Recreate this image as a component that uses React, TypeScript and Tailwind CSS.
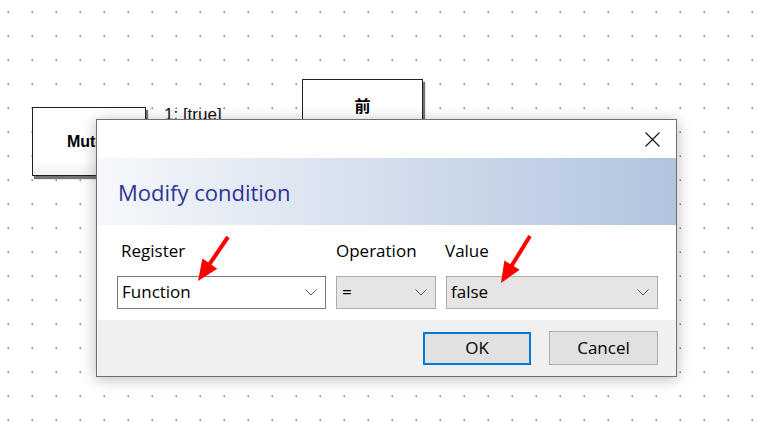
import React from "react";

function Arrow({ x1, y1, x2, y2 }: { x1: number; y1: number; x2: number; y2: number }) {
  const dx = x2 - x1;
  const dy = y2 - y1;
  const len = Math.hypot(dx, dy);
  const ux = dx / len;
  const uy = dy / len;
  const px = -uy;
  const py = ux;
  const hl = 21;
  const hw = 9;
  const bx = x2 - ux * hl;
  const by = y2 - uy * hl;
  return (
    <g>
      <line x1={x1} y1={y1} x2={bx + ux * 3} y2={by + uy * 3} stroke="#ff0000" strokeWidth={4} />
      <polygon
        points={`${x2},${y2} ${bx + px * hw},${by + py * hw} ${bx - px * hw},${by - py * hw}`}
        fill="#ff0000"
      />
    </g>
  );
}

function Chevron() {
  return (
    <svg width="12" height="7" viewBox="0 0 12 7" className="shrink-0">
      <path d="M0.5 0.5 L6 6 L11.5 0.5" fill="none" stroke="#5a5a5a" strokeWidth="1" />
    </svg>
  );
}

const uiFont = { fontFamily: '"Open Sans", "Noto Sans", sans-serif' };

export default function App() {
  return (
    <div className="relative w-[768px] h-[431px] overflow-hidden bg-white">
      {/* dotted canvas */}
      <svg className="absolute inset-0" width="768" height="431">
        <defs>
          <pattern id="dots" x="0" y="0" width="24" height="24" patternUnits="userSpaceOnUse">
            <rect x="7.5" y="11.5" width="1.5" height="1.5" fill="#777" />
          </pattern>
        </defs>
        <rect width="768" height="431" fill="url(#dots)" />
      </svg>

      {/* diagram nodes */}
      <div
        className="absolute left-[32px] top-[107px] w-[114px] h-[69px] border border-[#222] bg-gradient-to-b from-white from-[80%] to-[#f0f0f0] shadow-[2px_3px_1px_rgba(0,0,0,0.55)] flex items-center justify-center pl-[2px] text-[16px] font-bold text-black"
        style={{ fontFamily: '"Liberation Sans", Arial, sans-serif' }}
      >
        Mutex
      </div>
      <div
        className="absolute left-[164px] top-[105px] text-[17px] leading-[20px] text-[#111]"
        style={{ fontFamily: '"Liberation Sans", Arial, sans-serif' }}
      >
        1: [true]
      </div>
      <div
        className="absolute left-[302px] top-[79px] w-[121px] h-[68px] border border-[#222] bg-white shadow-[2px_3px_1px_rgba(0,0,0,0.55)] flex justify-center pt-[14px] text-[16px] leading-[22px] font-bold text-black"
        style={{ fontFamily: '"Noto Sans CJK SC", sans-serif' }}
      >
        前
      </div>

      {/* dialog */}
      <div
        className="absolute left-[96px] top-[119px] w-[581px] h-[258px] border border-[#707070] bg-white shadow-[0_2px_14px_rgba(0,0,0,0.28)] flex flex-col"
        style={uiFont}
      >
        <div className="h-[38px] shrink-0 flex items-center justify-end pr-[16px]">
          <svg width="15" height="15" viewBox="0 0 15 15">
            <path d="M0.5 0.5 L14.5 14.5 M14.5 0.5 L0.5 14.5" stroke="#111" strokeWidth="1.1" />
          </svg>
        </div>
        <div className="h-[67px] shrink-0 bg-gradient-to-r from-[#f6f8fb] to-[#b1c4de] flex items-center pl-[21px]">
          <span className="text-[22px] text-[#2f3594] leading-none">Modify condition</span>
        </div>
        <div className="flex-1 pl-[20px] pr-[18px] pt-[14px] flex gap-[10px] text-[17px] text-black">
          <div className="w-[209px] shrink-0 flex flex-col">
            <div className="h-[24px] leading-[24px] pl-[4px]">Register</div>
            <div className="mt-[13px] h-[33px] border border-[#7a7a7a] bg-white flex items-center justify-between pl-[4px] pr-[8px]">
              <span className="leading-[24px] -mt-[2px]">Function</span>
              <Chevron />
            </div>
          </div>
          <div className="w-[100px] shrink-0 flex flex-col">
            <div className="h-[24px] leading-[24px]">Operation</div>
            <div className="mt-[13px] h-[33px] border border-[#adadad] bg-[#e5e5e5] flex items-center justify-between pl-[5px] pr-[8px]">
              <span className="leading-[24px] -mt-[2px]">=</span>
              <Chevron />
            </div>
          </div>
          <div className="w-[212px] shrink-0 flex flex-col">
            <div className="h-[24px] leading-[24px] -ml-[1px]">Value</div>
            <div className="mt-[13px] h-[33px] border border-[#adadad] bg-[#e5e5e5] flex items-center justify-between pl-[4px] pr-[8px]">
              <span className="leading-[24px] -mt-[2px]">false</span>
              <Chevron />
            </div>
          </div>
        </div>
        <div className="h-[56px] shrink-0 bg-[#f0f0f0] flex items-center justify-end gap-[18px] pr-[18px] text-[17px] text-black">
          <div className="w-[108px] h-[33px] border-2 border-[#0078d7] bg-[#e1e1e1] flex items-center justify-center">
            OK
          </div>
          <div className="w-[109px] h-[34px] border border-[#adadad] bg-[#e1e1e1] flex items-center justify-center">
            Cancel
          </div>
        </div>
      </div>

      {/* red arrows */}
      <svg className="absolute inset-0 pointer-events-none" width="768" height="431">
        <Arrow x1={228} y1={237} x2={198} y2={281} />
        <Arrow x1={530} y1={236} x2={501} y2={283} />
      </svg>
    </div>
  );
}
